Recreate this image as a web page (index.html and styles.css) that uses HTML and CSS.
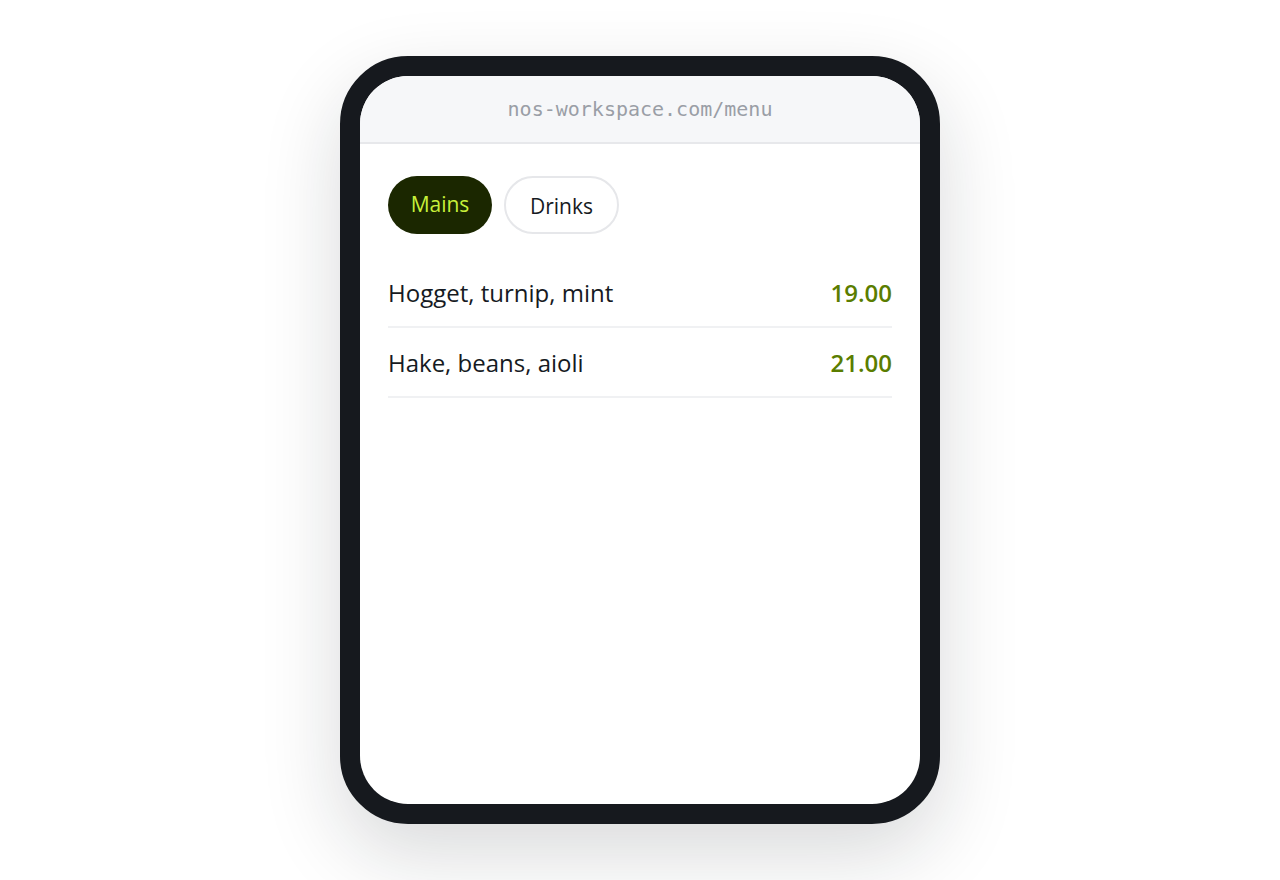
FILE: index.html
```html
<!DOCTYPE html>
<html lang="en">
<head>
<meta charset="utf-8">
<title>Menu</title>
<link rel="stylesheet" href="styles.css">
</head>
<body>
  <div class="phone">
    <div class="screen">
      <div class="addressbar">nos-workspace.com/menu</div>
      <div class="content">
        <div class="tabs">
          <button class="tab tab-active">Mains</button>
          <button class="tab">Drinks</button>
        </div>
        <ul class="menu">
          <li class="item"><span class="name">Hogget, turnip, mint</span><span class="price">19.00</span></li>
          <li class="item"><span class="name">Hake, beans, aioli</span><span class="price">21.00</span></li>
        </ul>
      </div>
    </div>
  </div>
</body>
</html>
```
FILE: styles.css
```css
html, body {
  margin: 0;
  padding: 0;
  height: 100%;
}
body {
  background: #ffffff;
  display: flex;
  align-items: center;
  justify-content: center;
  font-family: "Open Sans", "Noto Sans", sans-serif;
}
.phone {
  width: 600px;
  height: 768px;
  box-sizing: border-box;
  border: 20px solid #16191e;
  border-radius: 68px;
  background: #16191e;
  box-shadow: 0 30px 80px rgba(20, 24, 30, 0.16);
}
.screen {
  width: 100%;
  height: 100%;
  background: #ffffff;
  border-radius: 48px;
  overflow: hidden;
  display: flex;
  flex-direction: column;
}
.addressbar {
  height: 68px;
  flex: none;
  background: #f6f7f9;
  border-bottom: 2px solid #e7e8eb;
  display: flex;
  align-items: center;
  justify-content: center;
  font-family: "DejaVu Sans Mono", "Liberation Mono", monospace;
  font-size: 20px;
  color: #9a9ea6;
  box-sizing: border-box;
}
.content {
  padding: 32px 28px;
}
.tabs {
  display: flex;
  gap: 12px;
  margin-bottom: 24px;
}
.tab {
  font-family: "Open Sans", "Noto Sans", sans-serif;
  font-size: 21px;
  height: 58px;
  padding: 2px 24px 0;
  border-radius: 29px;
  border: 2px solid #e6e7ea;
  background: #ffffff;
  color: #161a22;
  line-height: 1;
}
.tab-active {
  background: #1b2700;
  border: none;
  color: #c8f03a;
  padding: 0 22px 2px;
  min-width: 104px;
}
.menu {
  list-style: none;
  margin: 0;
  padding: 0;
}
.item {
  display: flex;
  justify-content: space-between;
  align-items: center;
  padding: 19px 0 17px;
  line-height: 32px;
  font-size: 24px;
  border-bottom: 2px solid #f0f1f3;
  color: #161a22;
}
.price {
  color: #5a7d00;
  font-weight: 600;
}
```
